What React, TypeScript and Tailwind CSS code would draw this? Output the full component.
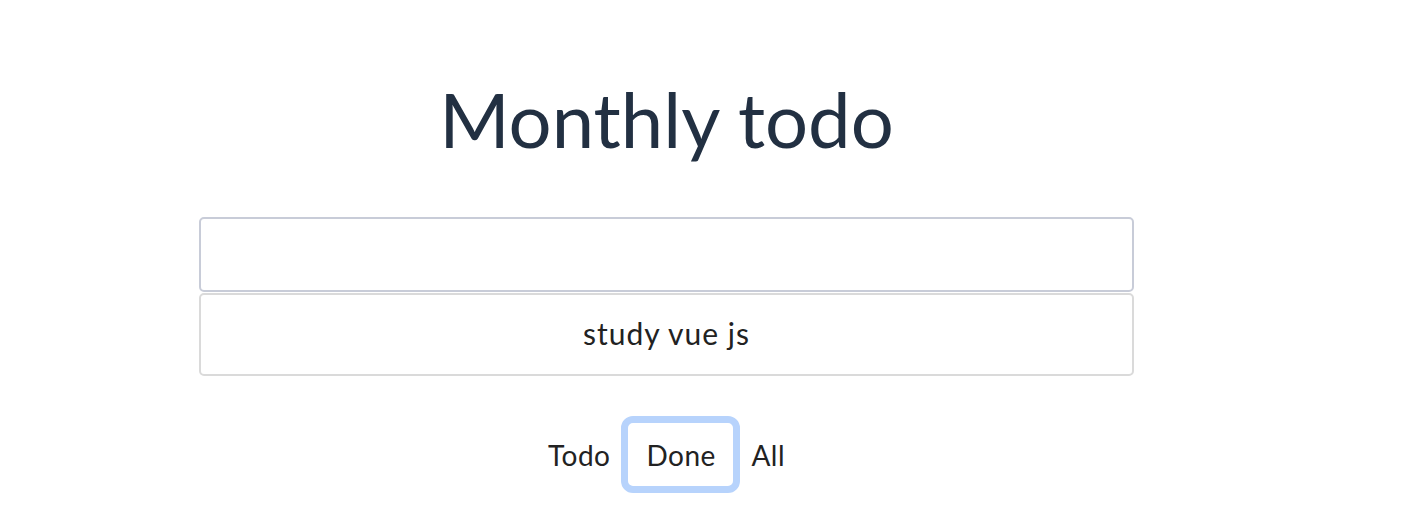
const FILTERS = ["Todo", "Done", "All"] as const;

export default function App() {
  const active = "Done";

  return (
    <div
      className="min-h-[530px] w-full bg-white"
      style={{ fontFamily: "Lato, 'Noto Sans', sans-serif" }}
    >
      <div className="ml-[199px] w-[935px] pt-[64px]">
        <h1 className="text-center text-[76px] leading-[110px] font-normal text-[#223042]">
          Monthly todo
        </h1>

        <div className="mt-[43px] flex flex-col gap-px">
          <input
            className="h-[75px] w-full rounded-[5px] border-2 border-[#c8ccd8] bg-white px-4 text-center text-[28px] outline-none"
            aria-label="New todo"
          />
          <div className="flex h-[83px] items-center justify-center rounded-[5px] border-2 border-[#dadada] pb-[2px] text-[30px] tracking-[1px] text-[#222]">
            study vue js
          </div>
        </div>

        <div className="mt-[47px] flex justify-center">
          {FILTERS.map((f) => (
            <button
              key={f}
              className={
                "h-[63px] rounded-[5px] px-[18px] text-[28px] tracking-[0.5px] text-[#222] " +
                (f === active ? "w-[105px] outline-[7px] outline-solid outline-[#b7d3fc]" : "")
              }
            >
              {f}
            </button>
          ))}
        </div>
      </div>
    </div>
  );
}
